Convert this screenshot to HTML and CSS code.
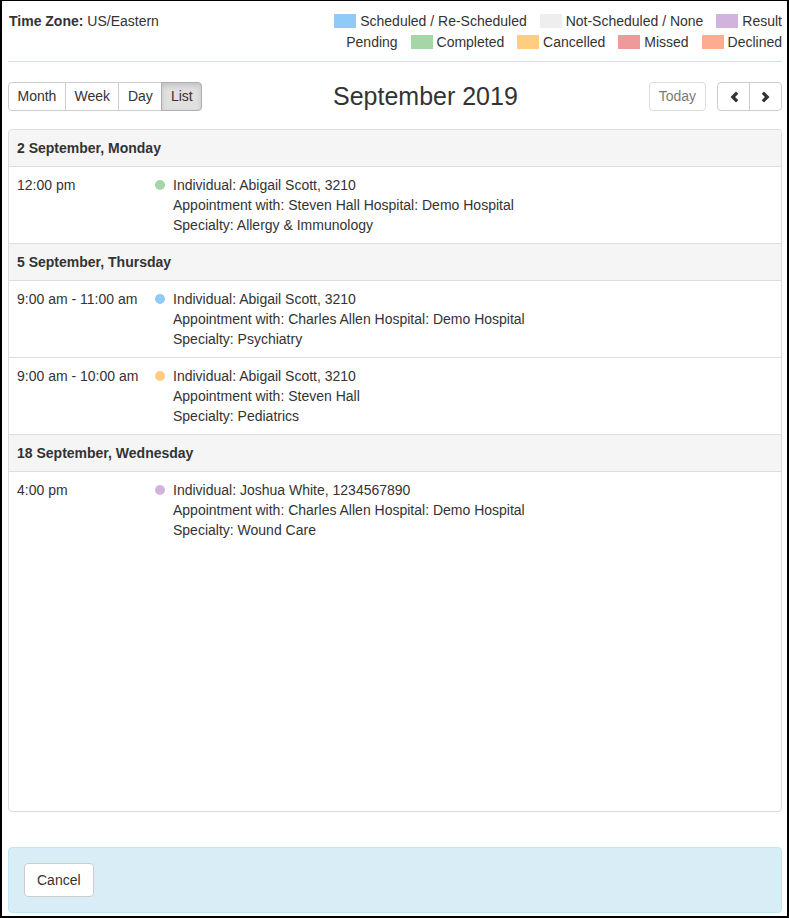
FILE: index.html
```html
<html lang="en">
  <head>
    <meta charset="utf-8"/>
    <title>Appointments</title>
    <meta name="viewport" content="width=device-width, initial-scale=1.0"/>
    <link rel="stylesheet" href="styles.css">
  </head>
  <body>
    <div id="dialog">
      <div class="head">
        <div class="zone"><b>Time Zone:</b> US/Eastern</div>
        <div class="legend">
          <i class="swatch scheduled"></i><span>Scheduled / Re-Scheduled</span>
          <i class="swatch none"></i><span>Not-Scheduled / None</span>
          <i class="swatch pending"></i><span>Result</span> <span>Pending</span>
          <i class="swatch completed"></i><span>Completed</span>
          <i class="swatch cancelled"></i><span>Cancelled</span>
          <i class="swatch missed"></i><span>Missed</span>
          <i class="swatch declined"></i><span>Declined</span>
        </div>
      </div>
      <hr class="rule"/>

      <div class="toolbar">
        <div class="group">
          <button class="btn">Month</button>
          <button class="btn">Week</button>
          <button class="btn">Day</button>
          <button class="btn active">List</button>
        </div>
        <h2 class="title">September 2019</h2>
        <div class="right">
          <button class="btn today" disabled>Today</button>
          <div class="group">
            <button class="btn arrow" id="prev">
              <svg width="12" height="12" viewBox="0 0 12 12"><path d="M8 0.5 L10.3 2.8 L7.1 6 L10.3 9.2 L8 11.5 L2.5 6 Z" fill="#333"/></svg>
            </button>
            <button class="btn arrow" id="next">
              <svg width="12" height="12" viewBox="0 0 12 12"><path d="M4 0.5 L1.7 2.8 L4.9 6 L1.7 9.2 L4 11.5 L9.5 6 Z" fill="#333"/></svg>
            </button>
          </div>
        </div>
      </div>

      <div class="list">
        <div class="day">2 September, Monday</div>
        <div class="event">
          <div class="time">12:00 pm</div>
          <span class="dot completed"></span>
          <div class="info">
            Individual: Abigail Scott, 3210<br>
            Appointment with: Steven Hall Hospital: Demo Hospital<br>
            Specialty: Allergy &amp; Immunology
          </div>
        </div>

        <div class="day">5 September, Thursday</div>
        <div class="event">
          <div class="time">9:00 am - 11:00 am</div>
          <span class="dot scheduled"></span>
          <div class="info">
            Individual: Abigail Scott, 3210<br>
            Appointment with: Charles Allen Hospital: Demo Hospital<br>
            Specialty: Psychiatry
          </div>
        </div>
        <div class="event">
          <div class="time">9:00 am - 10:00 am</div>
          <span class="dot cancelled"></span>
          <div class="info">
            Individual: Abigail Scott, 3210<br>
            Appointment with: Steven Hall<br>
            Specialty: Pediatrics
          </div>
        </div>

        <div class="day">18 September, Wednesday</div>
        <div class="event last">
          <div class="time">4:00 pm</div>
          <span class="dot pending"></span>
          <div class="info">
            Individual: Joshua White, 1234567890<br>
            Appointment with: Charles Allen Hospital: Demo Hospital<br>
            Specialty: Wound Care
          </div>
        </div>
      </div>

      <div class="footer">
        <button class="btn cancel">Cancel</button>
      </div>
    </div>
  </body>
</html>
```

FILE: styles.css
```css
* {
  box-sizing: border-box;
}
body {
  margin: 0;
  font-family: "Liberation Sans", Arial, Helvetica, sans-serif;
  font-size: 14px;
  color: #333;
}
#dialog {
  width: 789px;
  height: 918px;
  border: 2px solid #000;
  border-top-width: 1px;
  padding: 0 5px 0 6px;
}
.head {
  display: flex;
  justify-content: space-between;
  padding: 9.5px 0 0 1px;
  line-height: 21px;
}
.legend {
  width: 470px;
  text-align: right;
}
.swatch {
  display: inline-block;
  width: 22px;
  height: 14px;
  margin: 0 4px 0 9px;
  vertical-align: -2px;
}
.scheduled { background: #90caf9; }
.none { background: #eeeeee; }
.pending { background: #d1b3de; }
.completed { background: #a5d6a7; }
.cancelled { background: #ffcc80; }
.missed { background: #ef9a9a; }
.declined { background: #ffab91; }
.rule {
  margin: 8.5px 0 0 0;
  border: 0;
  border-top: 1px solid #c4e6e8;
}
.toolbar {
  display: flex;
  align-items: center;
  margin-top: 20px;
}
.group {
  display: flex;
}
.btn {
  font-family: inherit;
  font-size: 14px;
  color: #333;
  height: 29px;
  padding: 0 8.5px;
  background: #fff;
  border: 1px solid #ccc;
  border-radius: 4px;
  line-height: 19px;
}
.group .btn {
  border-radius: 0;
  margin-left: -1px;
}
.group .btn:first-child {
  margin-left: 0;
  border-radius: 4px 0 0 4px;
}
.group .btn:last-child {
  border-radius: 0 4px 4px 0;
}
.btn.active {
  background: #e0e0e0;
  border-color: #adadad;
  box-shadow: inset 0 3px 5px rgba(0, 0, 0, 0.125);
}
.title {
  flex: 1;
  margin: 0;
  text-align: center;
  font-size: 25px;
  font-weight: normal;
  line-height: 29px;
}
.right {
  display: flex;
  gap: 11px;
}
.btn.today {
  padding: 0 9px;
  opacity: 0.65;
}
.btn.arrow {
  width: 33px;
  padding: 0;
  display: flex;
  align-items: center;
  justify-content: center;
}
.list {
  margin-top: 18px;
  height: 683px;
  border: 1px solid #ddd;
  border-radius: 4px;
}
.day {
  background: #f5f5f5;
  font-weight: bold;
  padding: 8px 8px;
  line-height: 20px;
  border-bottom: 1px solid #ddd;
}
.list .day:first-child {
  border-radius: 4px 4px 0 0;
}
.event {
  display: flex;
  padding: 8px 8px;
  line-height: 20px;
  border-bottom: 1px solid #ddd;
}
.event.last {
  border-bottom: 0;
}
.time {
  width: 138px;
}
.dot {
  width: 10px;
  height: 10px;
  border-radius: 50%;
  margin: 5px 8px 0 0;
}
.footer {
  margin-top: 35px;
  padding: 15px;
  background: #d9edf7;
  border: 1px solid #bce8f1;
  border-radius: 4px;
}
.btn.cancel {
  height: 34px;
  padding: 6px 12px;
  line-height: 20px;
}
```
